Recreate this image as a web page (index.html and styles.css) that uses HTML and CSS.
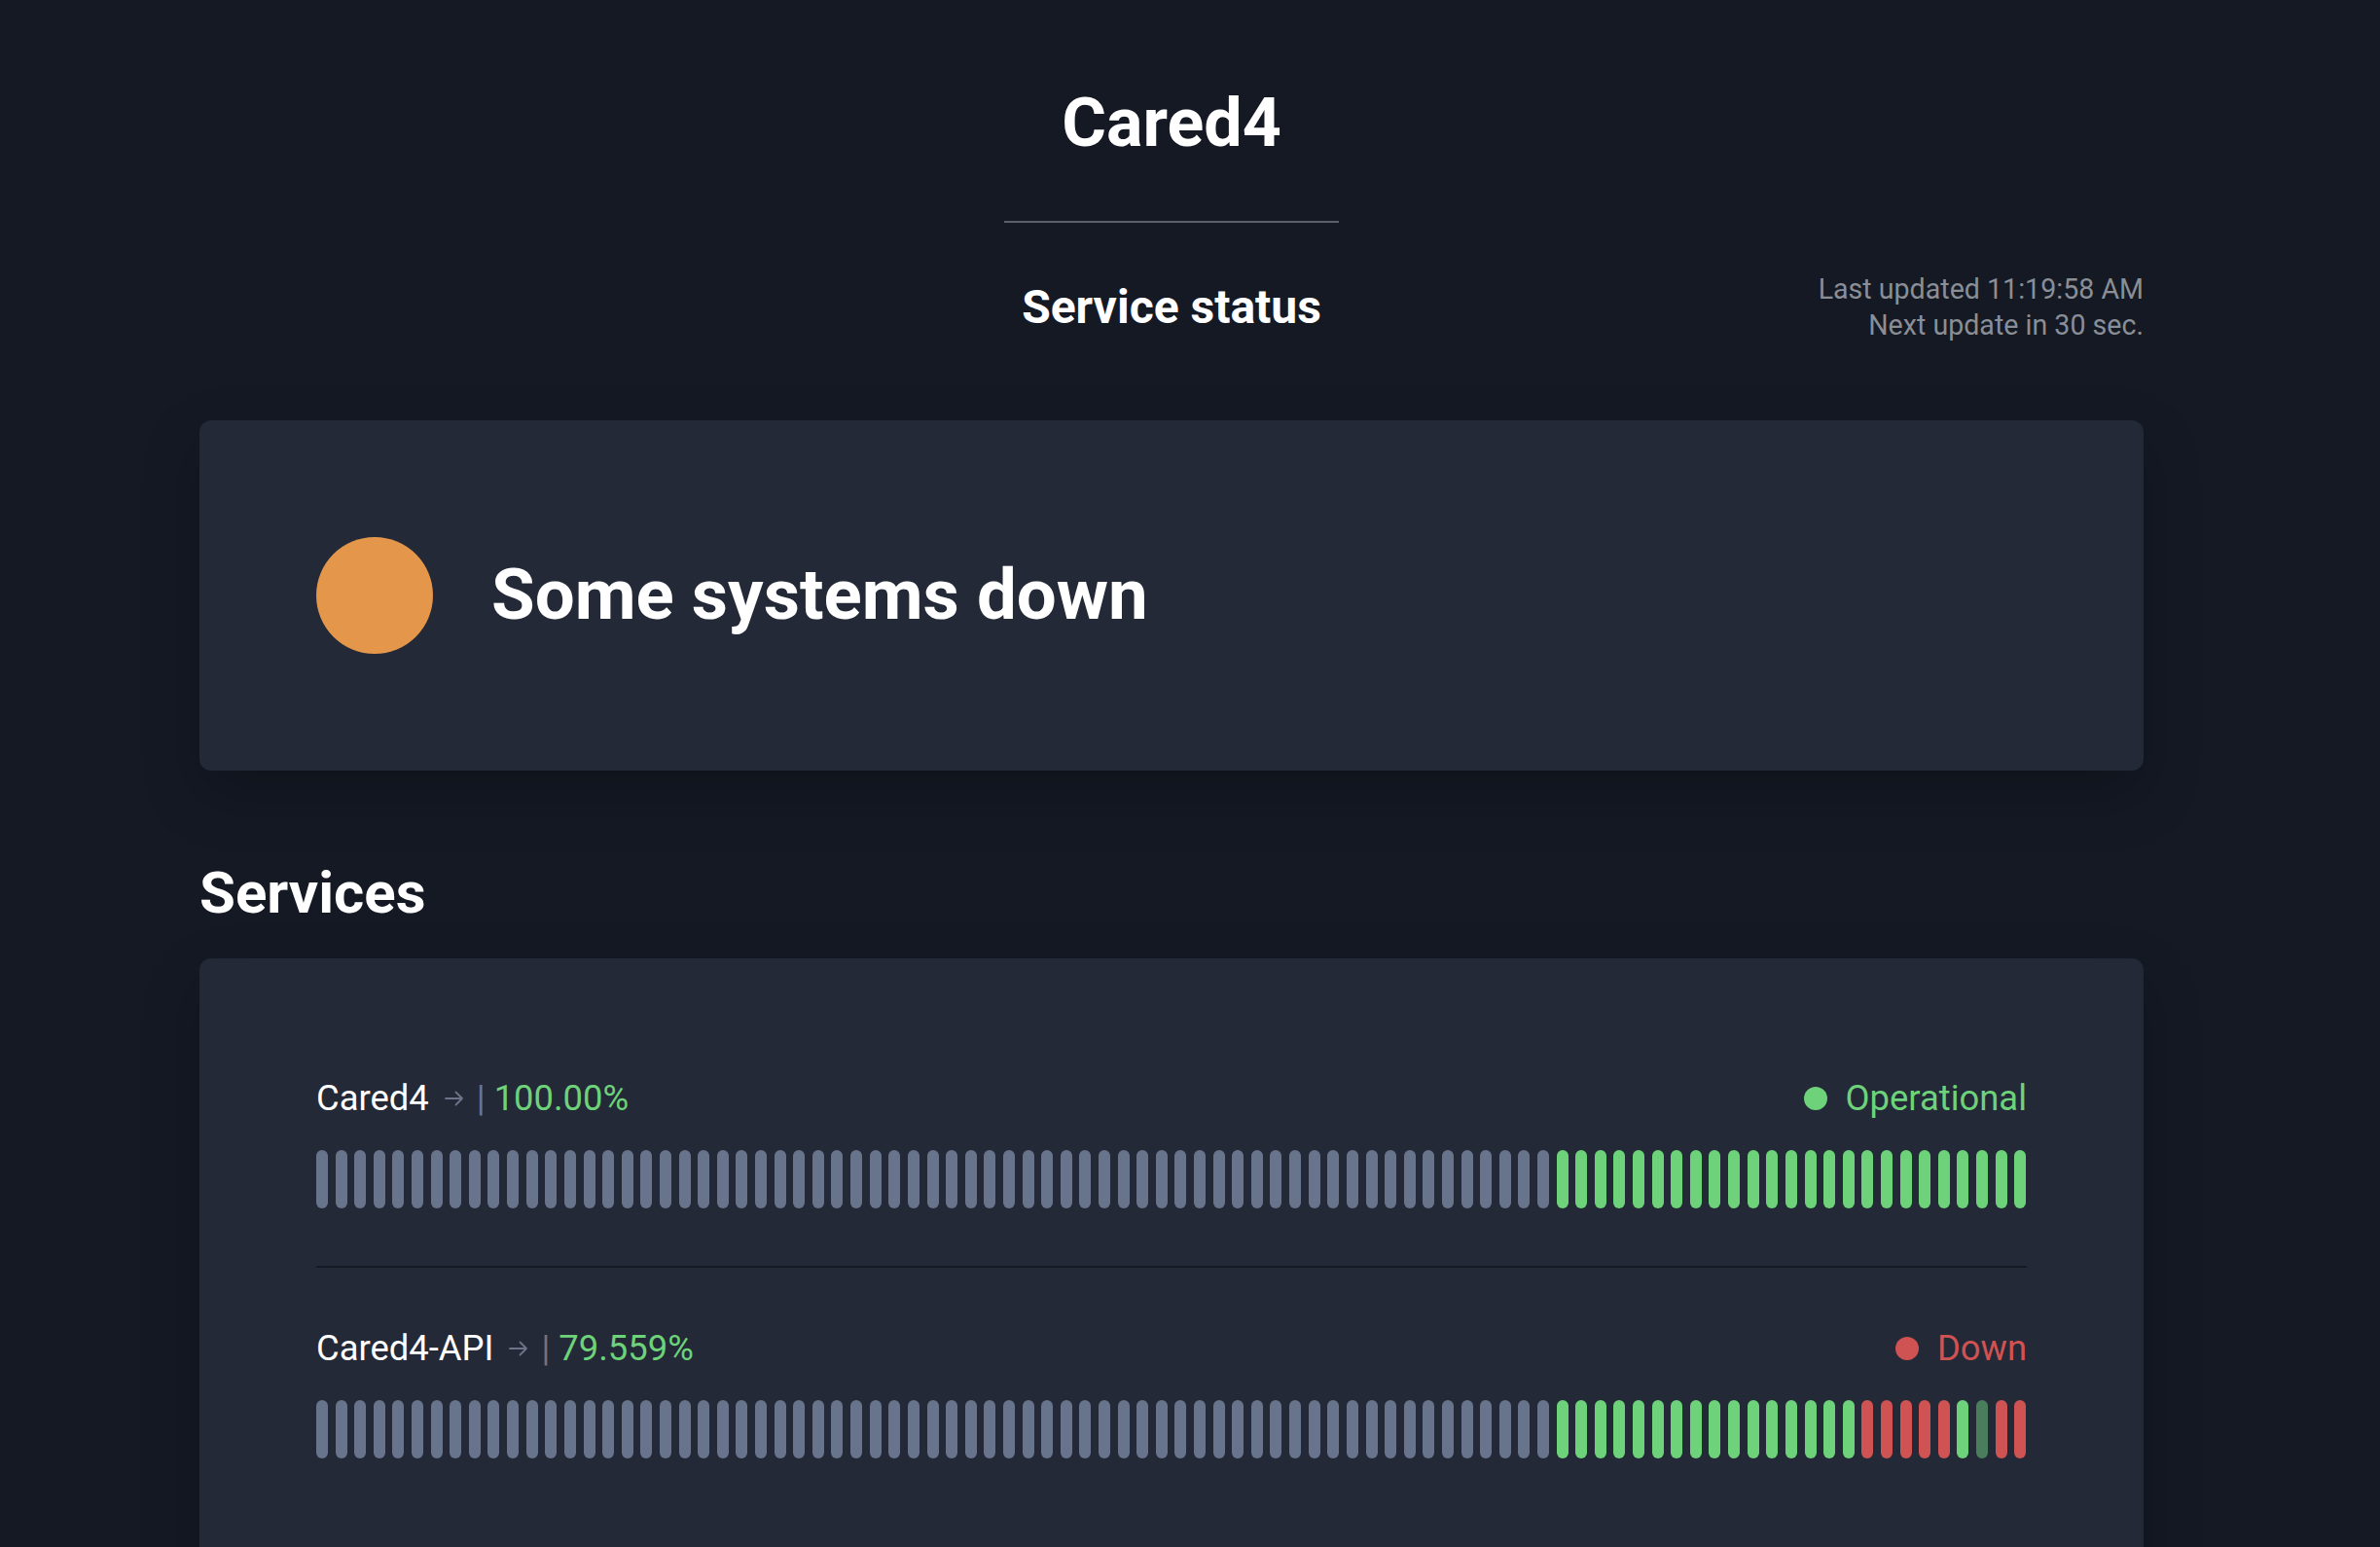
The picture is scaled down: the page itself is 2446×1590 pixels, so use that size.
FILE: index.html
```html
<!DOCTYPE html>
<html lang="en">
<head>
<meta charset="utf-8">
<title>Cared4 status</title>
<link rel="stylesheet" href="styles.css">
</head>
<body>
<main class="page">
  <h1 class="brand">Cared4</h1>
  <div class="divider"></div>
  <header class="status-head">
    <div></div>
    <h2 class="status-title">Service status</h2>
    <div class="updated">
      <div>Last updated 11:19:58 AM</div>
      <div>Next update in 30 sec.</div>
    </div>
  </header>

  <section class="overall card">
    <span class="overall-dot"></span>
    <span class="overall-text">Some systems down</span>
  </section>

  <h2 class="section-title">Services</h2>

  <section class="services card">
    <div class="service">
      <div class="service-head">
        <div class="service-name">
          <span class="name">Cared4</span>
          <svg class="arrow" width="20" height="16" viewBox="0 0 20 16"><path d="M1 8H18M11.5 1.5L18 8l-6.5 6.5" fill="none" stroke="currentColor" stroke-width="1.8" stroke-linecap="round" stroke-linejoin="round"/></svg>
          <span class="pipe">|</span>
          <span class="pct">100.00%</span>
        </div>
        <div class="state state-ok"><span class="state-dot"></span>Operational</div>
      </div>
      <div class="bars">
        <span class="b"></span><span class="b"></span><span class="b"></span><span class="b"></span><span class="b"></span><span class="b"></span><span class="b"></span><span class="b"></span><span class="b"></span><span class="b"></span>
        <span class="b"></span><span class="b"></span><span class="b"></span><span class="b"></span><span class="b"></span><span class="b"></span><span class="b"></span><span class="b"></span><span class="b"></span><span class="b"></span>
        <span class="b"></span><span class="b"></span><span class="b"></span><span class="b"></span><span class="b"></span><span class="b"></span><span class="b"></span><span class="b"></span><span class="b"></span><span class="b"></span>
        <span class="b"></span><span class="b"></span><span class="b"></span><span class="b"></span><span class="b"></span><span class="b"></span><span class="b"></span><span class="b"></span><span class="b"></span><span class="b"></span>
        <span class="b"></span><span class="b"></span><span class="b"></span><span class="b"></span><span class="b"></span><span class="b"></span><span class="b"></span><span class="b"></span><span class="b"></span><span class="b"></span>
        <span class="b"></span><span class="b"></span><span class="b"></span><span class="b"></span><span class="b"></span><span class="b"></span><span class="b"></span><span class="b"></span><span class="b"></span><span class="b"></span>
        <span class="b"></span><span class="b"></span><span class="b"></span><span class="b"></span><span class="b"></span>
        <span class="b up"></span><span class="b up"></span><span class="b up"></span><span class="b up"></span><span class="b up"></span><span class="b up"></span><span class="b up"></span><span class="b up"></span><span class="b up"></span><span class="b up"></span>
        <span class="b up"></span><span class="b up"></span><span class="b up"></span><span class="b up"></span><span class="b up"></span><span class="b up"></span><span class="b up"></span><span class="b up"></span><span class="b up"></span><span class="b up"></span>
        <span class="b up"></span><span class="b up"></span><span class="b up"></span><span class="b up"></span><span class="b up"></span>
      </div>
    </div>

    <div class="service">
      <div class="service-head">
        <div class="service-name">
          <span class="name">Cared4-API</span>
          <svg class="arrow" width="20" height="16" viewBox="0 0 20 16"><path d="M1 8H18M11.5 1.5L18 8l-6.5 6.5" fill="none" stroke="currentColor" stroke-width="1.8" stroke-linecap="round" stroke-linejoin="round"/></svg>
          <span class="pipe">|</span>
          <span class="pct">79.559%</span>
        </div>
        <div class="state state-down"><span class="state-dot"></span>Down</div>
      </div>
      <div class="bars">
        <span class="b"></span><span class="b"></span><span class="b"></span><span class="b"></span><span class="b"></span><span class="b"></span><span class="b"></span><span class="b"></span><span class="b"></span><span class="b"></span>
        <span class="b"></span><span class="b"></span><span class="b"></span><span class="b"></span><span class="b"></span><span class="b"></span><span class="b"></span><span class="b"></span><span class="b"></span><span class="b"></span>
        <span class="b"></span><span class="b"></span><span class="b"></span><span class="b"></span><span class="b"></span><span class="b"></span><span class="b"></span><span class="b"></span><span class="b"></span><span class="b"></span>
        <span class="b"></span><span class="b"></span><span class="b"></span><span class="b"></span><span class="b"></span><span class="b"></span><span class="b"></span><span class="b"></span><span class="b"></span><span class="b"></span>
        <span class="b"></span><span class="b"></span><span class="b"></span><span class="b"></span><span class="b"></span><span class="b"></span><span class="b"></span><span class="b"></span><span class="b"></span><span class="b"></span>
        <span class="b"></span><span class="b"></span><span class="b"></span><span class="b"></span><span class="b"></span><span class="b"></span><span class="b"></span><span class="b"></span><span class="b"></span><span class="b"></span>
        <span class="b"></span><span class="b"></span><span class="b"></span><span class="b"></span><span class="b"></span>
        <span class="b up"></span><span class="b up"></span><span class="b up"></span><span class="b up"></span><span class="b up"></span><span class="b up"></span><span class="b up"></span><span class="b up"></span><span class="b up"></span><span class="b up"></span>
        <span class="b up"></span><span class="b up"></span><span class="b up"></span><span class="b up"></span><span class="b up"></span><span class="b up"></span>
        <span class="b down"></span><span class="b down"></span><span class="b down"></span><span class="b down"></span><span class="b down"></span>
        <span class="b up"></span><span class="b partial"></span>
        <span class="b down"></span><span class="b down"></span>
      </div>
    </div>
  </section>
</main>
</body>
</html>
```

FILE: styles.css
```css
* { box-sizing: border-box; }

html, body {
  margin: 0;
  padding: 0;
  background: #141924;
}

body {
  font-family: Roboto, "Liberation Sans", Arial, sans-serif;
  color: #ffffff;
}

.page {
  width: 1998px;
  margin-left: 205px;
  padding-top: 84px;
  padding-bottom: 60px;
  display: flex;
  flex-direction: column;
}

.brand {
  margin: 0;
  font-size: 70px;
  line-height: 84px;
  font-weight: 700;
  text-align: center;
  color: #ffffff;
}

.divider {
  width: 344px;
  height: 2px;
  margin: 59px auto 0;
  background: #5b5f67;
}

.status-head {
  margin-top: 50px;
  display: grid;
  grid-template-columns: 1fr auto 1fr;
  align-items: center;
}

.status-title {
  margin: 0;
  font-size: 48px;
  line-height: 56px;
  font-weight: 700;
  color: #ffffff;
}

.updated {
  justify-self: end;
  text-align: right;
  font-size: 28.6px;
  line-height: 36.6px;
  color: #8a8e96;
}

.card {
  background: #232937;
  border-radius: 12px;
  box-shadow: 0 24px 60px rgba(0, 0, 0, 0.22);
}

.overall {
  margin-top: 80px;
  height: 360px;
  padding: 0 120px;
  display: flex;
  align-items: center;
  gap: 60px;
}

.overall-dot {
  width: 120px;
  height: 120px;
  border-radius: 50%;
  background: #e4974b;
  flex: 0 0 auto;
}

.overall-text {
  font-size: 72.6px;
  line-height: 84px;
  font-weight: 700;
  color: #ffffff;
}

.section-title {
  margin: 90px 0 31px;
  font-size: 60px;
  line-height: 72px;
  font-weight: 700;
  color: #ffffff;
}

.services {
  padding: 61px 120px 60px;
}

.service {
  padding: 59px 0;
  border-bottom: 2px solid #151a25;
}

.service:last-child {
  border-bottom: none;
}

.service-head {
  display: flex;
  justify-content: space-between;
  align-items: center;
  font-size: 36.4px;
  line-height: 48px;
}

.service-name {
  display: flex;
  align-items: center;
}

.name {
  color: #ffffff;
}

.arrow {
  margin-left: 16px;
  color: #6b7489;
  flex: 0 0 auto;
}

.pipe {
  margin-left: 13px;
  color: #6b7489;
}

.pct {
  margin-left: 9px;
  color: #6dd27a;
}

.state {
  display: flex;
  align-items: center;
}

.state-dot {
  width: 24px;
  height: 24px;
  border-radius: 50%;
  margin-right: 19px;
  background: currentColor;
}

.state-ok { color: #6dd27a; }
.state-down { color: #d05353; }

.bars {
  margin-top: 29px;
  height: 60px;
  display: flex;
  justify-content: space-between;
}

.b {
  flex: 0 0 12px;
  height: 60px;
  border-radius: 6px;
  background: #68738c;
}

.b.up { background: #6dd27a; }
.b.down { background: #d05353; }
.b.partial { background: #4a7d5b; }
```
